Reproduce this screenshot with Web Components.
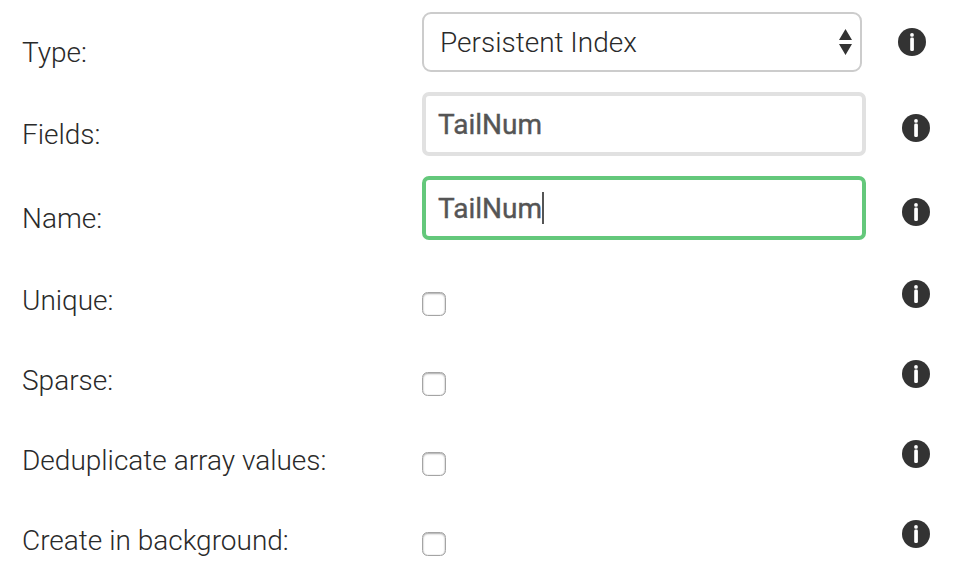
<!DOCTYPE html>
<html lang="en"><head><meta charset="utf-8"><title>Create index</title>
<style>body{margin:0;background:#fff;font-family:Roboto,sans-serif;font-weight:300;color:#2a2a2a}</style></head><body>
<index-form></index-form>
<script>
customElements.define('info-icon', class extends HTMLElement {
  constructor(){super();this.attachShadow({mode:'open'}).innerHTML=`<style>:host{display:block;width:28px;height:28px}svg{display:block}</style>
<svg width="28" height="28" viewBox="0 0 28 28"><circle cx="14" cy="14" r="14" fill="#333"/><circle cx="14" cy="6.9" r="1.9" fill="#fff"/><rect x="12.2" y="9.5" width="3.7" height="13.6" rx="1.4" fill="#fff"/></svg>`;}
});
customElements.define('check-box', class extends HTMLElement {
  constructor(){super();this.attachShadow({mode:'open'}).innerHTML=`<style>:host{display:block;box-sizing:border-box;width:24px;height:24px;border:1px solid #a4a4a4;border-radius:5.5px;background:#fff;box-shadow:inset 0 1px 2px #aaa,inset 0 0 1px #aaa}</style>`;}
});
customElements.define('text-box', class extends HTMLElement {
  constructor(){super();this.attachShadow({mode:'open'}).innerHTML=`<style>:host{display:flex;align-items:center;box-sizing:border-box;width:444px;height:64px;border:4px solid #e1e1e1;border-radius:7px;padding-left:12px;font-size:28px;font-weight:400;color:#555;-webkit-text-stroke:.4px #555}:host([active]){border-color:#64c87b}
i{display:none;width:2px;height:32px;background:#555}:host([active]) i{display:block}</style><slot></slot><i></i>`;}
});
customElements.define('select-box', class extends HTMLElement {
  constructor(){super();this.attachShadow({mode:'open'}).innerHTML=`<style>:host{display:flex;align-items:center;justify-content:space-between;box-sizing:border-box;width:440px;height:60px;border:2px solid #ccc;border-radius:9px;padding:0 8px 0 16px;font-size:28px}</style><span><slot></slot></span>
<svg width="13" height="26" viewBox="0 0 13 26"><path d="M6.5 0l6.5 11H0zM6.5 26l6.5-11H0z" fill="#333"/></svg>`;}
});
customElements.define('form-row', class extends HTMLElement {
  constructor(){super();this.attachShadow({mode:'open'}).innerHTML=`<style>:host{display:grid;grid-template-columns:400px 476px 1fr;align-items:start;padding-left:22px;height:var(--h);box-sizing:border-box}
.l{font-size:28px;line-height:34px;padding-top:var(--l)}.c{padding-top:var(--c)}info-icon{margin:var(--i) 0 0 var(--x,4px)}</style><div class="l"><slot name="label"></slot></div><div class="c"><slot></slot></div><info-icon></info-icon>`;}
});
customElements.define('index-form', class extends HTMLElement {
  constructor(){super();const check=t=>`<form-row class="k"><span slot="label">${t}</span><check-box></check-box></form-row>`;
  this.attachShadow({mode:'open'}).innerHTML=`<style>:host{display:block;height:584px;overflow:hidden}
.s{--h:92px;--l:36px;--c:12px;--i:28px;--x:0px}.f{--h:84px;--l:26px;--c:0px;--i:22px}.n{--h:104px;--l:26px;--c:0px;--i:22px}.k{--h:80px;--l:4px;--c:12px;--i:0px}</style>
<form-row class="s"><span slot="label">Type:</span><select-box>Persistent Index</select-box></form-row>
<form-row class="f"><span slot="label">Fields:</span><text-box>TailNum</text-box></form-row>
<form-row class="n"><span slot="label">Name:</span><text-box active>TailNum</text-box></form-row>
${['Unique:','Sparse:','Deduplicate array values:','Create in background:'].map(check).join('')}`;}
});
</script></body></html>
